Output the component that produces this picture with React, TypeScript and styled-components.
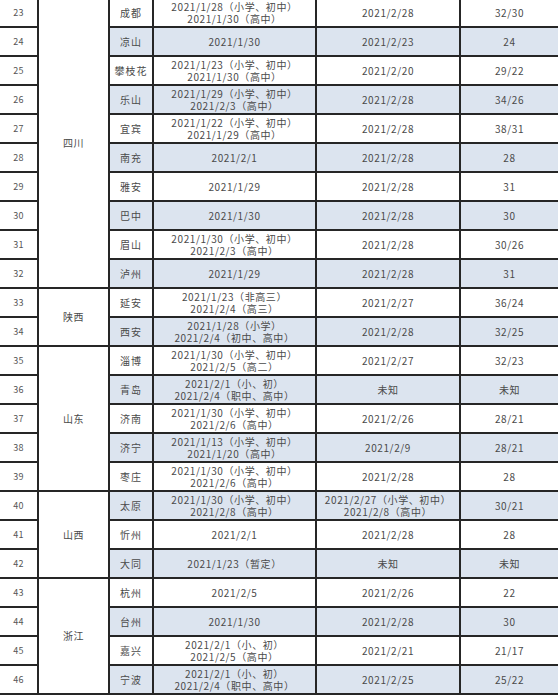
import styled, { createGlobalStyle } from "styled-components";

const GlobalStyle = createGlobalStyle`
  html, body {
    margin: 0;
    padding: 0;
    background: #ffffff;
  }
  body {
    font-family: "Noto Sans CJK SC", "Noto Sans", sans-serif;
    color: #4a4a4a;
  }
`;

const Page = styled.div`
  width: 558px;
  height: 696px;
  overflow: hidden;
`;

const Table = styled.div`
  display: grid;
  grid-template-columns: 39px 71px 44px 163px 144px 97px;
  grid-auto-rows: 29px;
  margin-top: -1px;
`;

const Cell = styled.div<{ $shaded?: boolean }>`
  box-sizing: border-box;
  display: flex;
  align-items: center;
  justify-content: center;
  text-align: center;
  border-right: 2px solid #262626;
  border-bottom: 2px solid #262626;
  background: ${({ $shaded }) => ($shaded ? "#dce4ef" : "#ffffff")};
  font-size: 10px;
  line-height: 11.5px;
  letter-spacing: 0.6px;
  white-space: pre-line;
`;

const NumCell = styled(Cell)`
  grid-column: 1;
  font-size: 9px;
  letter-spacing: 0.3px;
  color: #555;
`;

const ProvinceCell = styled(Cell)<{ $span: number }>`
  grid-column: 2;
  grid-row: span ${({ $span }) => $span};
`;

const CityCell = styled(Cell)`
  grid-column: 3;
  letter-spacing: 1px;
`;

const StartCell = styled(Cell)`
  grid-column: 4;
`;

const EndCell = styled(Cell)`
  grid-column: 5;
`;

const DaysCell = styled(Cell)`
  grid-column: 6;
  border-right: none;
`;

type Row = {
  no: number;
  city: string;
  start: string;
  end: string;
  days: string;
};

type Group = {
  province: string;
  rows: Row[];
};

const groups: Group[] = [
  {
    province: "四川",
    rows: [
      { no: 23, city: "成都", start: "2021/1/28（小学、初中）\n2021/1/30（高中）", end: "2021/2/28", days: "32/30" },
      { no: 24, city: "凉山", start: "2021/1/30", end: "2021/2/23", days: "24" },
      { no: 25, city: "攀枝花", start: "2021/1/23（小学、初中）\n2021/1/30（高中）", end: "2021/2/20", days: "29/22" },
      { no: 26, city: "乐山", start: "2021/1/29（小学、初中）\n2021/2/3（高中）", end: "2021/2/28", days: "34/26" },
      { no: 27, city: "宜宾", start: "2021/1/22（小学、初中）\n2021/1/29（高中）", end: "2021/2/28", days: "38/31" },
      { no: 28, city: "南充", start: "2021/2/1", end: "2021/2/28", days: "28" },
      { no: 29, city: "雅安", start: "2021/1/29", end: "2021/2/28", days: "31" },
      { no: 30, city: "巴中", start: "2021/1/30", end: "2021/2/28", days: "30" },
      { no: 31, city: "眉山", start: "2021/1/30（小学、初中）\n2021/2/3（高中）", end: "2021/2/28", days: "30/26" },
      { no: 32, city: "泸州", start: "2021/1/29", end: "2021/2/28", days: "31" },
    ],
  },
  {
    province: "陕西",
    rows: [
      { no: 33, city: "延安", start: "2021/1/23（非高三）\n2021/2/4（高三）", end: "2021/2/27", days: "36/24" },
      { no: 34, city: "西安", start: "2021/1/28（小学）\n2021/2/4（初中、高中）", end: "2021/2/28", days: "32/25" },
    ],
  },
  {
    province: "山东",
    rows: [
      { no: 35, city: "淄博", start: "2021/1/30（小学、初中）\n2021/2/5（高二）", end: "2021/2/27", days: "32/23" },
      { no: 36, city: "青岛", start: "2021/2/1（小、初）\n2021/2/4（职中、高中）", end: "未知", days: "未知" },
      { no: 37, city: "济南", start: "2021/1/30（小学、初中）\n2021/2/6（高中）", end: "2021/2/26", days: "28/21" },
      { no: 38, city: "济宁", start: "2021/1/13（小学、初中）\n2021/1/20（高中）", end: "2021/2/9", days: "28/21" },
      { no: 39, city: "枣庄", start: "2021/1/30（小学、初中）\n2021/2/6（高中）", end: "2021/2/28", days: "28" },
    ],
  },
  {
    province: "山西",
    rows: [
      { no: 40, city: "太原", start: "2021/1/30（小学、初中）\n2021/2/8（高中）", end: "2021/2/27（小学、初中）\n2021/2/8（高中）", days: "30/21" },
      { no: 41, city: "忻州", start: "2021/2/1", end: "2021/2/28", days: "28" },
      { no: 42, city: "大同", start: "2021/1/23（暂定）", end: "未知", days: "未知" },
    ],
  },
  {
    province: "浙江",
    rows: [
      { no: 43, city: "杭州", start: "2021/2/5", end: "2021/2/26", days: "22" },
      { no: 44, city: "台州", start: "2021/1/30", end: "2021/2/28", days: "30" },
      { no: 45, city: "嘉兴", start: "2021/2/1（小、初）\n2021/2/5（高中）", end: "2021/2/21", days: "21/17" },
      { no: 46, city: "宁波", start: "2021/2/1（小、初）\n2021/2/4（职中、高中）", end: "2021/2/25", days: "25/22" },
    ],
  },
];

const App = () => {
  return (
    <Page>
      <GlobalStyle />
      <Table>
        {groups.map((group) =>
          group.rows.map((row, i) => {
            const shaded = row.no % 2 === 0;
            return [
              <NumCell key={`n${row.no}`}>{row.no}</NumCell>,
              i === 0 && (
                <ProvinceCell key={`p${row.no}`} $span={group.rows.length}>
                  {group.province}
                </ProvinceCell>
              ),
              <CityCell key={`c${row.no}`} $shaded={shaded}>
                {row.city}
              </CityCell>,
              <StartCell key={`s${row.no}`} $shaded={shaded}>
                {row.start}
              </StartCell>,
              <EndCell key={`e${row.no}`} $shaded={shaded}>
                {row.end}
              </EndCell>,
              <DaysCell key={`d${row.no}`} $shaded={shaded}>
                {row.days}
              </DaysCell>,
            ];
          })
        )}
      </Table>
    </Page>
  );
};

export default App;
